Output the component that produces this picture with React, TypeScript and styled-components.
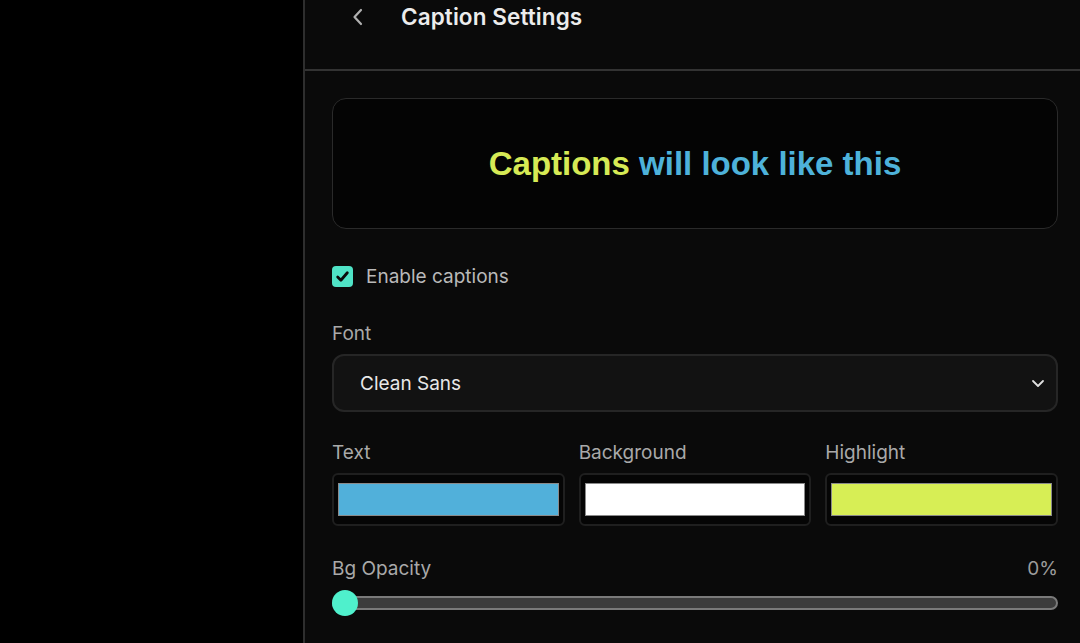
import styled, { createGlobalStyle } from "styled-components";

const GlobalStyle = createGlobalStyle`
    html, body {
        margin: 0;
        padding: 0;
        background: #000;
        overflow: hidden;
    }
    * {
        box-sizing: border-box;
    }
`;

const Page = styled.div`
    display: flex;
    width: 1080px;
    height: 643px;
    background: #000;
    font-family: Inter, "Liberation Sans", sans-serif;
`;

const Sidebar = styled.div`
    width: 303px;
    flex-shrink: 0;
    background: #000;
`;

const Panel = styled.div`
    flex: 1;
    display: flex;
    flex-direction: column;
    background: #0a0a0a;
    border-left: 2px solid #2e2e2e;
`;

const Header = styled.div`
    height: 71px;
    display: flex;
    align-items: flex-start;
    gap: 31px;
    padding: 3px 0 0 41px;
    border-bottom: 2px solid #333;
`;

const BackButton = styled.button`
    all: unset;
    display: flex;
    align-items: center;
    justify-content: center;
    width: 24px;
    height: 28px;
    color: #b0b0b0;
    cursor: pointer;
`;

const Title = styled.h1`
    margin: 0;
    font-size: 22.5px;
    line-height: 28px;
    font-weight: 600;
    color: #ececec;
    letter-spacing: 0.1px;
`;

const Body = styled.div`
    display: flex;
    flex-direction: column;
    width: 726px;
    margin-left: 27px;
    padding-top: 27px;
`;

const Preview = styled.div`
    height: 131px;
    display: flex;
    align-items: center;
    justify-content: center;
    background: #040404;
    border: 1px solid #2a2a2a;
    border-radius: 14px;
    font-family: "Liberation Sans", Arial, sans-serif;
    font-weight: 700;
    font-size: 33px;
`;

const Word = styled.span<{ $color: string }>`
    color: ${(p) => p.$color};
`;

const CheckRow = styled.label`
    display: flex;
    align-items: center;
    gap: 13px;
    margin-top: 36px;
    font-size: 19px;
    color: #b9b9b9;
`;

const CheckBox = styled.span`
    width: 21px;
    height: 21px;
    border-radius: 4px;
    background: #4fe3c6;
    display: flex;
    align-items: center;
    justify-content: center;
`;

const FieldLabel = styled.div`
    font-size: 19px;
    line-height: 22px;
    color: #a9a9a9;
`;

const FontField = styled.div`
    display: flex;
    flex-direction: column;
    gap: 9px;
    margin-top: 35px;
`;

const Select = styled.div`
    height: 58px;
    display: flex;
    align-items: center;
    justify-content: space-between;
    padding: 0 10px 0 26px;
    background: #121212;
    border: 2px solid #262626;
    border-radius: 12px;
    font-size: 19px;
    color: #e8e8e8;
`;

const ColorGrid = styled.div`
    display: grid;
    grid-template-columns: repeat(3, 1fr);
    gap: 14px;
    margin-top: 30px;
`;

const ColorField = styled.div`
    display: flex;
    flex-direction: column;
    gap: 9px;
`;

const Swatch = styled.div`
    height: 53px;
    padding: 8px 4px;
    background: #050505;
    border: 2px solid #1f1f1f;
    border-radius: 6px;
`;

const SwatchFill = styled.div<{ $color: string }>`
    height: 100%;
    background: ${(p) => p.$color};
    border: 1px solid #8a8a8a;
`;

const SliderHead = styled.div`
    display: flex;
    justify-content: space-between;
    margin-top: 32px;
`;

const Value = styled.div`
    font-size: 19px;
    line-height: 22px;
    color: #9c9c9c;
`;

const Track = styled.div`
    position: relative;
    height: 14px;
    margin-top: 16px;
    background: #3c3c3c;
    border: 2px solid #7a7a7a;
    border-radius: 7px;
`;

const Thumb = styled.div`
    position: absolute;
    left: -2px;
    top: 50%;
    width: 26px;
    height: 26px;
    margin-top: -13px;
    border-radius: 50%;
    background: #4ff0cc;
`;

const App = () => {
    return (
        <Page>
            <GlobalStyle />
            <Sidebar />
            <Panel>
                <Header>
                    <BackButton>
                        <svg width="14" height="18" viewBox="0 0 14 18" fill="none">
                            <path d="M10 2 L3.5 9 L10 16" stroke="currentColor" strokeWidth="2.2" strokeLinecap="round" strokeLinejoin="round" />
                        </svg>
                    </BackButton>
                    <Title>Caption Settings</Title>
                </Header>
                <Body>
                    <Preview>
                        <Word $color="#d6ea55">Captions</Word>
                        &nbsp;
                        <Word $color="#4eb2da">will look like this</Word>
                    </Preview>
                    <CheckRow>
                        <CheckBox>
                            <svg width="15" height="15" viewBox="0 0 14 14" fill="none">
                                <path d="M2.5 7.5 L5.5 10.5 L11.5 3.5" stroke="#0a0a0a" strokeWidth="2.6" strokeLinecap="round" strokeLinejoin="round" />
                            </svg>
                        </CheckBox>
                        Enable captions
                    </CheckRow>
                    <FontField>
                        <FieldLabel>Font</FieldLabel>
                        <Select>
                            Clean Sans
                            <svg width="16" height="16" viewBox="0 0 16 16" fill="none">
                                <path d="M3 6 L8 11 L13 6" stroke="#e0e0e0" strokeWidth="1.8" strokeLinecap="round" strokeLinejoin="round" />
                            </svg>
                        </Select>
                    </FontField>
                    <ColorGrid>
                        <ColorField>
                            <FieldLabel>Text</FieldLabel>
                            <Swatch>
                                <SwatchFill $color="#51b0da" />
                            </Swatch>
                        </ColorField>
                        <ColorField>
                            <FieldLabel>Background</FieldLabel>
                            <Swatch>
                                <SwatchFill $color="#ffffff" />
                            </Swatch>
                        </ColorField>
                        <ColorField>
                            <FieldLabel>Highlight</FieldLabel>
                            <Swatch>
                                <SwatchFill $color="#d7ee55" />
                            </Swatch>
                        </ColorField>
                    </ColorGrid>
                    <SliderHead>
                        <FieldLabel>Bg Opacity</FieldLabel>
                        <Value>0%</Value>
                    </SliderHead>
                    <Track>
                        <Thumb />
                    </Track>
                </Body>
            </Panel>
        </Page>
    );
};

export default App;
